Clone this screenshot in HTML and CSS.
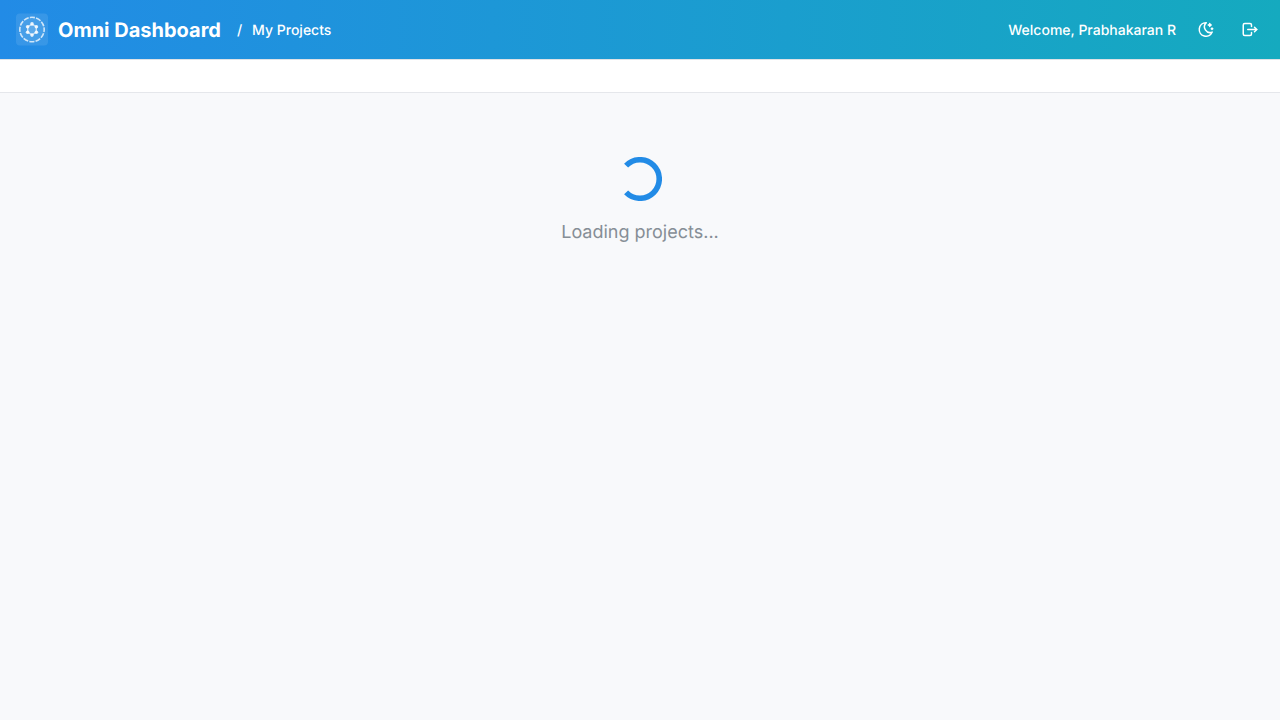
FILE: index.html
```html
<!DOCTYPE html>
<html lang="en">
<head>
<meta charset="utf-8">
<title>Omni Dashboard</title>
<link rel="stylesheet" href="styles.css">
</head>
<body>
<header class="header">
  <div class="brand">
    <svg class="logo" viewBox="0 0 32 32" fill="none" stroke="#fff">
      <circle cx="16" cy="16" r="12.2" fill="#fff" fill-opacity=".08" stroke-width="1.6" stroke-opacity=".75" stroke-dasharray="5.2 1.188" stroke-dashoffset="2.6"/>
      <path d="M16 10.7l4.3 2.5v5.6L16 21.3l-4.3-2.5v-5.6z" fill="#fff" fill-opacity=".12" stroke-width="1.4" stroke-opacity=".65"/>
      <g class="logo-nodes">
        <circle cx="16" cy="10.4" r="1.8"/><circle cx="20.4" cy="13.2" r="1.8"/><circle cx="20.4" cy="18.8" r="1.8"/>
        <circle cx="16" cy="21.6" r="1.8"/><circle cx="11.6" cy="18.8" r="1.8"/><circle cx="11.6" cy="13.2" r="1.8"/>
      </g>
    </svg>
    <h1 class="title">Omni Dashboard</h1>
  </div>
  <nav class="crumbs"><span class="slash">/</span><span>My Projects</span></nav>
  <div class="actions">
    <span class="welcome">Welcome, Prabhakaran R</span>
    <button class="icon-button" aria-label="Toggle theme">
      <svg class="icon" viewBox="0 0 24 24"><path d="M12 3c.132 0 .263 0 .393 0a7.5 7.5 0 0 0 7.92 12.446a9 9 0 1 1 -8.313 -12.454z"/><path d="M17 4a2 2 0 0 0 2 2a2 2 0 0 0 -2 2a2 2 0 0 0 -2 -2a2 2 0 0 0 2 -2"/><path d="M19 11h2m-1 -1v2"/></svg>
    </button>
    <button class="icon-button" aria-label="Log out">
      <svg class="icon" viewBox="0 0 24 24"><path d="M14 8v-2a2 2 0 0 0 -2 -2h-7a2 2 0 0 0 -2 2v12a2 2 0 0 0 2 2h7a2 2 0 0 0 2 -2v-2"/><path d="M9 12h12l-3 -3"/><path d="M18 15l3 -3"/></svg>
    </button>
  </div>
</header>
<div class="toolbar"></div>
<main class="content">
  <svg class="loader" viewBox="0 0 44 44"><path d="M8.1 8.68A19.25 19.25 0 1 1 8.1 35.32"/></svg>
  <p class="message">Loading projects...</p>
</main>
</body>
</html>
```
FILE: styles.css
```css
* { box-sizing: border-box; }
body {
  margin: 0;
  min-height: 100vh;
  background: #f8f9fb;
  font-family: Inter, "Liberation Sans", sans-serif;
  text-rendering: geometricPrecision;
}
.header {
  display: flex;
  align-items: center;
  height: 60px;
  padding: 0 16px 1px;
  border-bottom: 1px solid #dee2e6;
  background: linear-gradient(90deg, #228be6, #15aabf) padding-box;
  color: #fff;
}
.brand { display: flex; align-items: center; gap: 10px; }
.logo {
  width: 32px;
  height: 32px;
  border-radius: 4px;
  background: rgba(255, 255, 255, .1);
  transform: translateY(.5px);
}
.logo-nodes { fill: #fff; fill-opacity: .85; stroke: none; }
.title { margin: 0; padding-top: 2px; font-size: 20px; line-height: 26px; font-weight: 700; }
.crumbs { display: flex; gap: 10px; margin-left: 16px; }
.crumbs, .welcome {
  padding-top: 4px;
  font-size: 14px;
  line-height: 22px;
  font-weight: 500;
}
.actions { display: flex; align-items: center; gap: 16px; margin-left: auto; }
.icon-button {
  display: flex;
  align-items: center;
  justify-content: center;
  width: 28px;
  height: 28px;
  padding: 0;
  border: 0;
  background: transparent;
  color: #fff;
  transform: translateY(.5px);
}
.icon {
  width: 18px;
  height: 18px;
  fill: none;
  stroke: currentColor;
  stroke-width: 2;
  stroke-linecap: round;
  stroke-linejoin: round;
}
.toolbar { height: 33px; background: #fff; border-bottom: 1px solid #e5e7eb; }
.content { display: flex; flex-direction: column; align-items: center; gap: 16px; padding-top: 64px; }
.loader { width: 44px; height: 44px; fill: none; stroke: #228be6; stroke-width: 5.6; }
.message { margin: 0; padding-top: 1px; font-size: 18px; line-height: 29px; color: #868e96; }
```
